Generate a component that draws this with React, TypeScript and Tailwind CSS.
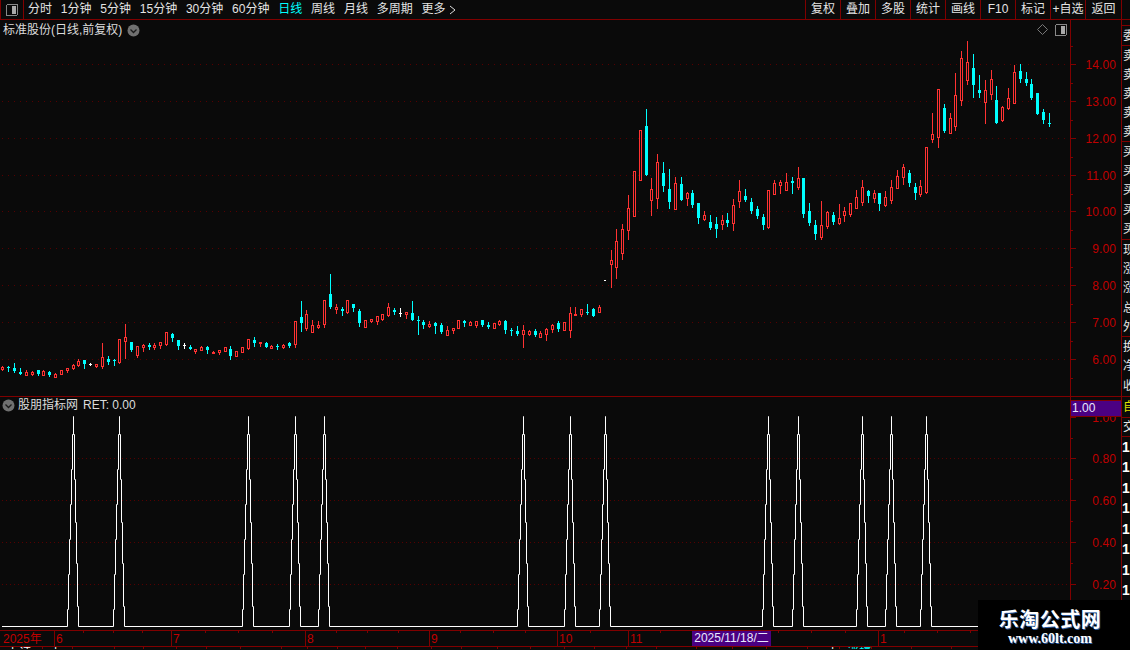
import React from 'react';

type Candle = [string, number, number, number, number, number];

const RED = '#ff3232';
const CYAN = '#00ffff';
const GRID = '#560000';
const LINE = 'bg-[#800000]';

// measured from crops: [colour, x, high, bodyTop, bodyBottom, low]
const crop1: Candle[] = [
  ['r',7,228,231,238,240],['c',25,228,232,234,243],['c',43,219,235,244,247],['c',61,234,246,251,252],['r',79,240,246,254,255],
  ['r',97,243,246,253,255],['c',115,240,240,252,255],['r',130,240,243,254,255],['c',148,243,246,256,258],['r',166,249,252,260,261],
  ['r',184,240,240,251,251],['r',202,234,234,240,246],['r',220,222,225,234,237],['r',235,207,213,225,229],['c',253,210,210,222,234],
  ['w',270,218,221,224,225],['r',289,222,222,228,231],['r',307,159,202,228,234],['c',325,198,207,216,222],['c',343,207,210,213,225],
  ['r',358,147,148,216,220],['r',376,102,142,152,204],['c',394,156,156,180,183],['r',412,168,169,194,201],['r',430,162,165,171,183],
  ['c',448,159,165,171,177],['r',463,159,165,171,177],['r',481,156,157,164,174],['r',499,126,127,161,164],['c',517,129,132,144,153],
  ['c',535,150,150,168,177],['w',553,159,165,167,174],['c',571,165,171,177,177],['r',586,177,178,183,189],['r',604,168,171,179,180],
  ['c',622,168,171,180,189],['r',640,183,185,189,189],['r',658,180,181,187,192],['r',676,171,172,183,183],['c',691,168,177,198,207],
  ['r',709,183,184,197,198],['r',727,171,172,185,186],['r',745,147,148,174,177],['c',763,141,150,159,168],['r',781,156,157,159,168],
  ['c',799,156,159,171,171],['r',814,165,168,174,174],['c',832,162,168,171,177],['r',850,162,164,171,174],['c',868,156,159,168,171],
  ['r',886,93,94,163,171],
];
const crop2: Candle[] = [
  ['c',3,93,141,159,183],['r',19,120,132,174,180],['r',37,150,165,186,186],['r',55,153,165,171,174],['r',73,90,91,162,171],
  ['c',91,12,72,111,114],['r',109,102,111,117,129],['c',127,111,117,123,135],['r',142,90,91,126,129],['c',160,102,102,114,123],
  ['c',178,117,123,159,168],['r',196,150,151,171,171],['r',214,147,148,153,156],['r',232,138,139,153,162],['r',247,132,133,147,150],
  ['r',265,99,111,135,138],['c',283,114,120,126,132],['w',301,114,128,130,138],['r',319,126,126,132,144],['c',337,93,129,150,150],
  ['c',355,138,150,153,192],['c',370,150,156,165,174],['r',388,153,162,168,171],['c',406,156,159,168,189],['c',424,159,165,186,189],
  ['r',442,168,180,195,195],['r',460,174,174,180,189],['r',475,150,151,174,174],['c',493,150,153,159,168],['r',511,153,156,165,165],
  ['r',529,153,154,165,171],['c',547,150,150,165,168],['c',565,156,165,171,174],['r',583,159,160,174,174],['r',598,150,153,162,165],
  ['c',616,150,153,180,189],['c',634,174,180,183,195],['c',652,168,183,192,195],['r',670,165,180,192,231],['r',688,180,183,192,195],
  ['c',706,177,183,195,198],['r',721,183,189,201,201],['r',739,174,177,192,210],['r',757,162,165,177,186],['c',775,153,159,177,183],
  ['r',793,156,157,180,180],['r',811,111,130,180,201],['r',826,111,131,133,135],['r',844,117,118,132,138],['c',862,102,127,130,132],
  ['c',880,114,117,138,138],['r',898,105,111,126,126],
];
const crop3: Candle[] = [
  ['r',34,450,481,491,561],['r',49,387,424,500,534],['r',67,372,388,458,477],['r',85,285,325,391,417],['r',103,213,214,347,347],
  ['r',121,90,91,239,239],['c',139,27,78,225,225],['r',154,234,268,299,345],['r',172,162,187,293,324],['c',190,186,219,258,273],
  ['c',208,207,267,306,324],['r',226,231,250,327,327],['c',244,231,252,300,300],['r',262,277,278,293,315],['c',277,270,279,315,321],
  ['c',295,309,309,354,369],['r',313,333,346,357,360],['c',331,345,366,384,387],['c',349,351,372,387,411],['r',367,345,361,372,387],
  ['c',382,339,360,369,378],['r',400,297,316,369,390],['r',418,240,274,303,321],['c',436,267,288,300,303],['c',454,294,306,333,339],
  ['c',472,318,327,348,354],['c',490,342,351,375,387],['r',505,270,271,381,384],['r',523,240,250,282,282],['r',541,240,247,255,279],
  ['r',559,219,247,270,270],['c',577,231,243,249,279],['r',595,201,235,261,267],['c',610,234,234,342,351],['c',628,309,333,369,375],
  ['c',646,360,375,402,417],['r',664,303,376,411,417],['r',682,333,336,378,384],
];
const crop4: Candle[] = [
  ['c',40,546,555,576,582],['r',58,522,564,579,582],['r',73,531,543,555,573],['r',91,519,520,552,558],['r',109,480,502,533,533],
  ['r',127,450,472,515,525],['c',145,480,483,498,516],['r',163,480,490,503,516],['c',178,489,489,522,540],['r',196,483,502,525,528],
  ['r',214,450,472,510,519],['r',232,420,438,473,473],['r',250,402,412,440,462],['c',268,420,429,459,468],['c',286,459,471,489,507],
  ['r',301,450,468,492,498],['r',319,351,351,486,489],['r',337,249,313,327,336],['r',355,177,178,320,351],['c',373,222,234,303,306],
  ['r',391,249,265,308,308],['r',406,129,196,288,300],['r',424,63,85,209,225],['r',442,33,97,149,162],['c',460,72,114,165,201],
  ['c',478,135,180,189,201],['r',496,150,181,215,279],['r',514,120,148,191,207],['c',529,168,210,279,279],['r',547,228,232,270,273],
  ['r',565,174,205,234,237],['r',583,105,127,219,219],['c',601,102,123,147,156],['c',619,126,147,159,165],['c',634,147,162,204,207],
  ['c',652,189,189,252,252],['c',670,237,246,270,279],['c',688,249,280,283,288],
];

function place(list: Candle[], ox: number, oy: number): Candle[] {
  return list.map(([c, x, h, t, b, l]) => [
    c,
    Math.round(ox + x / 3),
    Math.round(oy + h / 3),
    Math.round(oy + t / 3),
    Math.round(oy + b / 3),
    Math.round(oy + l / 3),
  ]);
}

const candles = [
  ...place(crop1, 0, 290),
  ...place(crop2, 300, 270),
  ...place(crop3, 600, 100),
  ...place(crop4, 820, 30),
];

const prices = [14, 13, 12, 11, 10, 9, 8, 7, 6];
const priceY = (p: number) => Math.round(64 + (14 - p) * 36.85);
const peaks = [73, 119, 248, 295, 324, 523, 570, 605, 768, 798, 862, 891, 926];

// each peak climbs in one pixel stairs and leaves the baseline open underneath
function spikePath(x: number) {
  return (
    `M${x - 5.5} 626.5V609.5H${x - 4.5}V574.5H${x - 3.5}V539.5H${x - 2.5}V504.5H${x - 1.5}V469.5H${x - 0.5}V434.5H${x + 0.5}V416.5` +
    `V434.5H${x + 1.5}V479.5H${x + 2.5}V522.5H${x + 3.5}V563.5H${x + 4.5}V606.5H${x + 5.5}V626.5`
  );
}

function baselinePath() {
  let d = 'M2 626.5';
  peaks.forEach((x, i) => {
    d += `H${x - 5.5}M${x + 5.5} 626.5`;
    if (i === peaks.length - 1) d += 'H978';
  });
  return d;
}

function Candles() {
  return (
    <>
      {candles.map(([c, x, h, t, b, l], i) => {
        const color = c === 'r' ? RED : c === 'c' ? CYAN : '#ffffff';
        return (
          <g key={i}>
            <line x1={x + 0.5} x2={x + 0.5} y1={h} y2={l + 1} stroke={color} />
            {c === 'r' ? (
              <rect x={x - 0.5} y={t + 0.5} width={2} height={Math.max(b - t, 1)} fill="#0a0a0a" stroke={color} />
            ) : (
              <rect x={x - 1} y={t} width={3} height={Math.max(b - t, 1)} fill={color} />
            )}
          </g>
        );
      })}
      <rect x={604} y={280} width={2} height={1} fill="#ffffff" />
    </>
  );
}

function MainChart() {
  return (
    <svg width={1070} height={376} viewBox="0 20 1070 376" className="block">
      {prices.map((p) => (
        <line key={p} x1={2} x2={1070} y1={priceY(p) + 0.5} y2={priceY(p) + 0.5} stroke={GRID} strokeDasharray="1 5" />
      ))}
      <Candles />
      <path d="M1042.5 24.5l5 5-5 5-5-5z" fill="none" stroke="#777777" />
    </svg>
  );
}

function IndicatorChart() {
  return (
    <svg width={1070} height={233} viewBox="0 397 1070 233" className="block">
      {[458, 500, 542, 584].map((y) => (
        <line key={y} x1={2} x2={1070} y1={y + 0.5} y2={y + 0.5} stroke={GRID} strokeDasharray="1 3" />
      ))}
      <path d={baselinePath()} stroke="#ffffff" fill="none" />
      {peaks.map((x) => (
        <path key={x} d={spikePath(x)} stroke="#ffffff" fill="none" />
      ))}
    </svg>
  );
}

function PriceAxis() {
  return (
    <svg width={50} height={376} viewBox="1071 20 50 376" className="block font-['Liberation_Sans']">
      {prices.map((p) => (
        <g key={p} shapeRendering="crispEdges">
          <line x1={1071} x2={1076} y1={priceY(p) + 0.5} y2={priceY(p) + 0.5} stroke="#800000" />
          <line x1={1071} x2={1073} y1={priceY(p) + 19} y2={priceY(p) + 19} stroke="#800000" />
        </g>
      ))}
      <line x1={1071} x2={1073} y1={46} y2={46} stroke="#800000" shapeRendering="crispEdges" />
      {prices.map((p) => (
        <text key={p} x={1116} y={priceY(p) + 5} textAnchor="end" fontSize={12} fill="#c00000" letterSpacing={0.1}>
          {p}.00
        </text>
      ))}
    </svg>
  );
}

function IndicatorAxis() {
  const rows: [number, string][] = [[417, '1.00'], [458, '0.80'], [500, '0.60'], [542, '0.40'], [584, '0.20']];
  return (
    <svg width={50} height={233} viewBox="1071 397 50 233" className="block font-['Liberation_Sans']">
      {rows.map(([y, t]) => (
        <g key={t}>
          <line x1={1071} x2={1076} y1={y + 0.5} y2={y + 0.5} stroke="#800000" shapeRendering="crispEdges" />
          <line x1={1071} x2={1073} y1={y + 21.5} y2={y + 21.5} stroke="#800000" shapeRendering="crispEdges" />
          <text x={1116} y={y + 5} textAnchor="end" fontSize={12} fill="#c00000" letterSpacing={0.1}>
            {t}
          </text>
        </g>
      ))}
    </svg>
  );
}

const months: [number, string][] = [[54, '6'], [171, '7'], [305, '8'], [429, '9'], [557, '10'], [628, '11'], [878, '1']];
const dateTicks = [83, 113, 142, 205, 238, 272, 336, 367, 398, 460, 493, 525, 590, 660, 742, 778, 811, 845, 904, 937, 970];

function DateAxis() {
  return (
    <svg width={1070} height={15} viewBox="0 631 1070 15" className="block font-['Liberation_Sans']">
      <g shapeRendering="crispEdges">
        {dateTicks.map((x) => (
          <line key={x} x1={x + 0.5} x2={x + 0.5} y1={631} y2={633} stroke="#800000" />
        ))}
        {months.map(([x]) => (
          <line key={x} x1={x + 0.5} x2={x + 0.5} y1={631} y2={646} stroke="#800000" />
        ))}
      </g>
      <text x={3} y={643} fontSize={12} fill="#c00000">
        2025<tspan fontFamily="'Noto Sans CJK SC'">年</tspan>
      </text>
      {months.map(([x, t]) => (
        <text key={x} x={x + 2} y={643} fontSize={12} fill="#c00000">
          {t}
        </text>
      ))}
    </svg>
  );
}

function Toggle() {
  return (
    <svg width={12} height={12} viewBox="0 0 12 12" shapeRendering="crispEdges">
      <rect x={0.5} y={0.5} width={11} height={11} rx={1.5} fill="none" stroke="#888888" />
      <rect x={6} y={2} width={4} height={8} fill="#aaaaaa" />
    </svg>
  );
}

function RoundArrow({ className }: { className?: string }) {
  return (
    <svg width={13} height={13} viewBox="0 0 13 13" className={className}>
      <circle cx={6.5} cy={6.5} r={6} fill="#707070" />
      <path d="M3.5 5.5l3 3 3-3" fill="none" stroke="#1a1a1a" strokeWidth={1.3} />
    </svg>
  );
}

const periods = ['分时', '1分钟', '5分钟', '15分钟', '30分钟', '60分钟', '日线', '周线', '月线', '多周期'];
const tools = ['复权', '叠加', '多股', '统计', '画线', 'F10', '标记', '+自选'];

function TopBar() {
  return (
    <div className="flex h-5 shrink-0 border-b border-[#800000] text-[12px] leading-[19px] text-[#e4e4e4]">
      <div className="flex w-6 items-center justify-center border-x border-[#800000]">
        <Toggle />
      </div>
      <div className="flex flex-1 gap-[8.8px] pl-1">
        {periods.map((p) => (
          <span key={p} className={p === '日线' ? 'text-[#00ffff]' : ''}>
            {p}
          </span>
        ))}
        <span className="flex items-center gap-[3px]">
          更多
          <svg width={7} height={10} viewBox="0 0 7 10">
            <path d="M1 1l5 4-5 4" fill="none" stroke="#dddddd" />
          </svg>
        </span>
      </div>
      {tools.map((t) => (
        <div key={t} className="w-[35px] whitespace-nowrap border-l border-[#800000] text-center">
          {t}
        </div>
      ))}
      <div className="w-[37px] border-x border-[#800000] text-center">返回</div>
      <div className="w-2" />
    </div>
  );
}

function SideCell({ t, h, tone, line }: { t: string; h: string; tone?: string; line?: boolean }) {
  return (
    <div
      className={`flex shrink-0 items-center overflow-hidden pl-px whitespace-nowrap ${h} ${tone ?? 'text-[#e8e8e8]'} ${
        line ? 'border-b border-[#800000]' : ''
      }`}
    >
      {t}
    </div>
  );
}

function SideColumn() {
  return (
    <div className="flex w-[9px] shrink-0 flex-col overflow-hidden border-l border-[#800000] text-[12px] leading-none">
      <SideCell t="" h="h-[6px]" line />
      <SideCell t="委" h="h-[20px]" line />
      {['卖', '卖', '卖', '卖'].map((t, i) => (
        <SideCell key={i} t={t} h="h-[19px]" />
      ))}
      <SideCell t="卖" h="h-[20px]" line />
      {['买', '买', '买', '买', '买'].map((t, i) => (
        <SideCell key={i} t={t} h="h-[19.4px]" />
      ))}
      <div className="h-px shrink-0 bg-[#800000]" />
      {['现', '涨', '涨', '总'].map((t, i) => (
        <SideCell key={i} t={t} h="h-[19.4px]" />
      ))}
      <SideCell t="外" h="h-[19.4px]" line />
      {['换', '净', '收'].map((t, i) => (
        <SideCell key={i} t={t} h="h-[19.6px]" />
      ))}
      <div className="h-px shrink-0 bg-[#800000]" />
      <SideCell t="自" h="h-[21px]" tone="text-[#e0e000]" line />
      <SideCell t="交" h="h-[19px]" line />
      {[0, 1, 2, 3, 4, 5, 6, 7].map((i) => (
        <div key={i} className="flex h-[20.5px] shrink-0 items-center font-['Liberation_Sans'] text-[14px] font-bold text-white">
          1
        </div>
      ))}
    </div>
  );
}

const footerCells = [43, 30, 42, 29, 33, 30, 34, 41, 26, 30, 28, 32, 34, 30, 36, 33, 34, 30, 32, 30, 40, 36, 34, 41, 32, 32, 40, 40, 40, 40, 40];

function Footer() {
  return (
    <div className="flex h-[3px] shrink-0 overflow-hidden border-t border-[#800000] text-[12px] leading-[12px] text-white">
      {footerCells.map((w, i) => (
        <div key={i} style={{ width: w }} className="shrink-0 overflow-hidden border-r border-[#800000] pl-[7px] whitespace-nowrap">
          {i === 0 ? '上证' : i === 1 ? '上' : i === 24 ? '\u3000上' : ''}
          {i === 25 ? <span className="text-[#00ffff]">涨幅</span> : null}
        </div>
      ))}
    </div>
  );
}

export default function App() {
  return (
    <div className="relative flex h-[650px] w-[1130px] flex-col overflow-hidden bg-[#0a0a0a] font-['Liberation_Sans','Noto_Sans_CJK_SC',sans-serif]">
      <TopBar />
      <div className="flex min-h-0 flex-1">
        <div className="flex w-[1121px] shrink-0 flex-col">
          <div className="relative flex h-[376px] shrink-0">
            <div className="w-[1070px] shrink-0">
              <MainChart />
            </div>
            <div className={`w-px shrink-0 ${LINE}`} />
            <PriceAxis />
            <div className="absolute left-[3px] top-[1px] flex items-center gap-[5px] text-[12px] leading-[18px] text-[#dcdcdc]">
              标准股份(日线,前复权)
              <RoundArrow />
            </div>
            <div className="absolute left-[1055px] top-[4px]">
              <Toggle />
            </div>
          </div>
          <div className={`h-px shrink-0 ${LINE}`} />
          <div className="relative flex h-[233px] shrink-0">
            <div className="w-[1070px] shrink-0">
              <IndicatorChart />
            </div>
            <div className={`w-px shrink-0 ${LINE}`} />
            <IndicatorAxis />
            <div className="absolute left-[2px] top-0 flex items-center gap-[3px] text-[12px] leading-[16px] text-[#dcdcdc]">
              <RoundArrow />
              <span>股朋指标网</span>
              <span className="ml-[2px]">RET: 0.00</span>
            </div>
            <div className="absolute left-[1071px] top-[3px] h-[17px] w-[50px] border-y border-[#800000] bg-[#4b0082] pl-[1px] text-[12px] leading-[15px] text-[#e8e8ff]">
              1.00
            </div>
          </div>
          <div className={`h-px shrink-0 ${LINE}`} />
          <div className="relative flex h-[15px] shrink-0">
            <DateAxis />
            <div className="absolute left-[692px] top-0 h-[15px] w-[79px] bg-[#4b0082] text-center text-[12px] leading-[15px] text-[#e8e8ff]">
              2025/11/18/二
            </div>
          </div>
          <Footer />
        </div>
        <SideColumn />
      </div>
      <div className="absolute left-[978px] top-[600px] flex h-[50px] w-[152px] flex-col items-center bg-black pt-[7px] pr-[8px] text-white">
        <div className="font-['Noto_Sans_CJK_SC'] text-[20px] font-bold leading-[24px] tracking-[0.5px] [text-shadow:1px_1px_0_#2a5aa0]">
          乐淘公式网
        </div>
        <div className="mt-px font-['Liberation_Serif'] text-[14px] font-bold leading-[14px] [text-shadow:1px_1px_0_#2a5aa0]">
          www.60lt.com
        </div>
      </div>
    </div>
  );
}
